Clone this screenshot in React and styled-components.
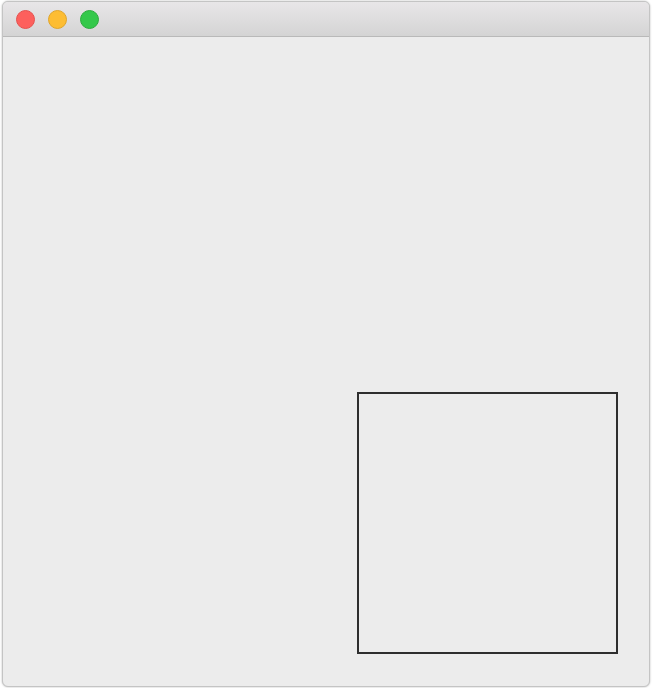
import React from "react";
import styled, { createGlobalStyle } from "styled-components";

const GlobalStyle = createGlobalStyle`
  html, body {
    margin: 0;
    padding: 0;
    background: #ffffff;
    font-family: "Liberation Sans", Arial, sans-serif;
  }
`;

const Frame = styled.div`
  width: 652px;
  height: 688px;
  padding: 1px 2px 1px 2px;
  box-sizing: border-box;
`;

const Window = styled.div`
  width: 100%;
  height: 100%;
  box-sizing: border-box;
  display: flex;
  flex-direction: column;
  border: 1px solid #c4c4c4;
  border-radius: 6px;
  overflow: hidden;
  background: #ececec;
  box-shadow: 0 0 2px rgba(0, 0, 0, 0.3);
`;

const TitleBar = styled.div`
  height: 35px;
  flex: none;
  display: flex;
  align-items: center;
  gap: 13px;
  padding-left: 13px;
  box-sizing: border-box;
  background: linear-gradient(#e8e6e8, #d4d4d4);
  border-bottom: 1px solid #b9b9b9;
`;

const Light = styled.span`
  width: 19px;
  height: 19px;
  border-radius: 50%;
  box-sizing: border-box;
  background: ${(p) => p.color};
  border: 1px solid ${(p) => p.edge};
`;

const Canvas = styled.div`
  flex: 1;
  display: flex;
  justify-content: flex-end;
  align-items: flex-end;
  padding: 0 31px 32px 0;
`;

const Box = styled.div`
  width: 261px;
  height: 262px;
  box-sizing: border-box;
  border: 2px solid #2e2e2e;
`;

export default function App() {
  return (
    <>
      <GlobalStyle />
      <Frame>
        <Window>
          <TitleBar>
            <Light color="#fd605d" edge="#e5514e" />
            <Light color="#fdbd33" edge="#e0a52a" />
            <Light color="#34c84a" edge="#2cac3d" />
          </TitleBar>
          <Canvas>
            <Box />
          </Canvas>
        </Window>
      </Frame>
    </>
  );
}
